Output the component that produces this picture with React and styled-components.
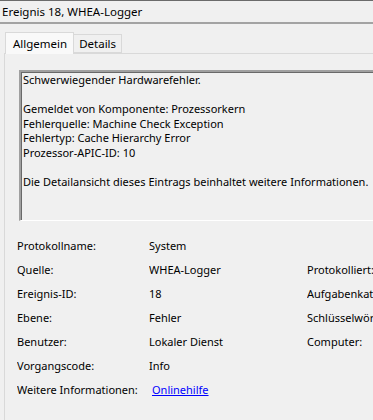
import React from 'react';
import styled, { createGlobalStyle } from 'styled-components';

const GlobalStyle = createGlobalStyle`
  html, body {
    margin: 0;
    padding: 0;
    background: #f0f0f0;
    overflow: hidden;
  }
  body {
    font-family: 'Segoe UI', 'Noto Sans', sans-serif;
    font-size: 11px;
    color: #000;
  }
`;

const Window = styled.div`
  width: 373px;
  height: 420px;
  background: #f0f0f0;
  border-top: 1px solid #6b6b6b;
  box-sizing: border-box;
  overflow: hidden;
`;

const TitleBar = styled.div`
  height: 21px;
  padding-left: 2px;
  display: flex;
  align-items: center;
  border-bottom: 2px solid #a3a3a3;
  white-space: nowrap;
  font-size: 11.5px;
`;

const TabStrip = styled.div`
  display: flex;
  align-items: flex-end;
  padding: 7px 0 0 5px;
  height: 22px;
`;

const Tab = styled.div`
  height: ${(p) => (p.active ? '22px' : '19px')};
  padding: ${(p) => (p.active ? '0 6px 0 7px' : '0 5px')};
  display: flex;
  align-items: center;
  box-sizing: border-box;
  background: ${(p) => (p.active ? '#f9f9f9' : '#f0f0f0')};
  border: 1px solid #d9d9d9;
  border-bottom: ${(p) => (p.active ? 'none' : '1px solid #d9d9d9')};
  margin-left: ${(p) => (p.active ? '0' : '-1px')};
  position: relative;
  z-index: ${(p) => (p.active ? 1 : 0)};
  margin-bottom: ${(p) => (p.active ? '-1px' : '0')};
  font-size: 11.5px;
`;

const Panel = styled.div`
  margin-left: 4px;
  border: 1px solid #d9d9d9;
  border-right: none;
  height: 380px;
  padding: 16px 0 0 14px;
  box-sizing: border-box;
`;

const MessageBox = styled.div`
  height: 151px;
  border-top: 2px solid #a0a0a0;
  border-left: 2px solid #a0a0a0;
  border-bottom: 1px solid #fff;
  box-shadow: inset 1px 1px 0 #696969;
  padding: 1px 0 0 2px;
  box-sizing: border-box;
  line-height: 14.6px;
  white-space: nowrap;
  margin-right: -40px;
`;

const Line = styled.div`
  height: 14.6px;
`;

const Props = styled.div`
  display: grid;
  grid-template-columns: 132px 158px 1fr;
  grid-auto-rows: 24px;
  margin: 12px 0 0 -2px;
  white-space: nowrap;
  align-items: center;
`;

const Cell = styled.div`
  overflow: hidden;
`;

const HelpLink = styled.a`
  color: #0000ff;
  text-decoration: underline;
  margin-left: 3px;
  cursor: pointer;
`;

const lines = [
  'Schwerwiegender Hardwarefehler.',
  '',
  'Gemeldet von Komponente: Prozessorkern',
  'Fehlerquelle: Machine Check Exception',
  'Fehlertyp: Cache Hierarchy Error',
  'Prozessor-APIC-ID: 10',
  '',
  'Die Detailansicht dieses Eintrags beinhaltet weitere Informationen.',
];

const rows = [
  ['Protokollname:', 'System', ''],
  ['Quelle:', 'WHEA-Logger', 'Protokolliert:'],
  ['Ereignis-ID:', '18', 'Aufgabenkategorie:'],
  ['Ebene:', 'Fehler', 'Schlüsselwörter:'],
  ['Benutzer:', 'Lokaler Dienst', 'Computer:'],
  ['Vorgangscode:', 'Info', ''],
];

export default function App() {
  return (
    <>
      <GlobalStyle />
      <Window>
        <TitleBar>Ereignis 18, WHEA-Logger</TitleBar>
        <TabStrip>
          <Tab active>Allgemein</Tab>
          <Tab>Details</Tab>
        </TabStrip>
        <Panel>
          <MessageBox>
            {lines.map((l, i) => (
              <Line key={i}>{l}</Line>
            ))}
          </MessageBox>
          <Props>
            {rows.map((r, i) => (
              <React.Fragment key={i}>
                <Cell>{r[0]}</Cell>
                <Cell>{r[1]}</Cell>
                <Cell>{r[2]}</Cell>
              </React.Fragment>
            ))}
            <Cell>Weitere Informationen:</Cell>
            <Cell>
              <HelpLink>Onlinehilfe</HelpLink>
            </Cell>
            <Cell />
          </Props>
        </Panel>
      </Window>
    </>
  );
}
